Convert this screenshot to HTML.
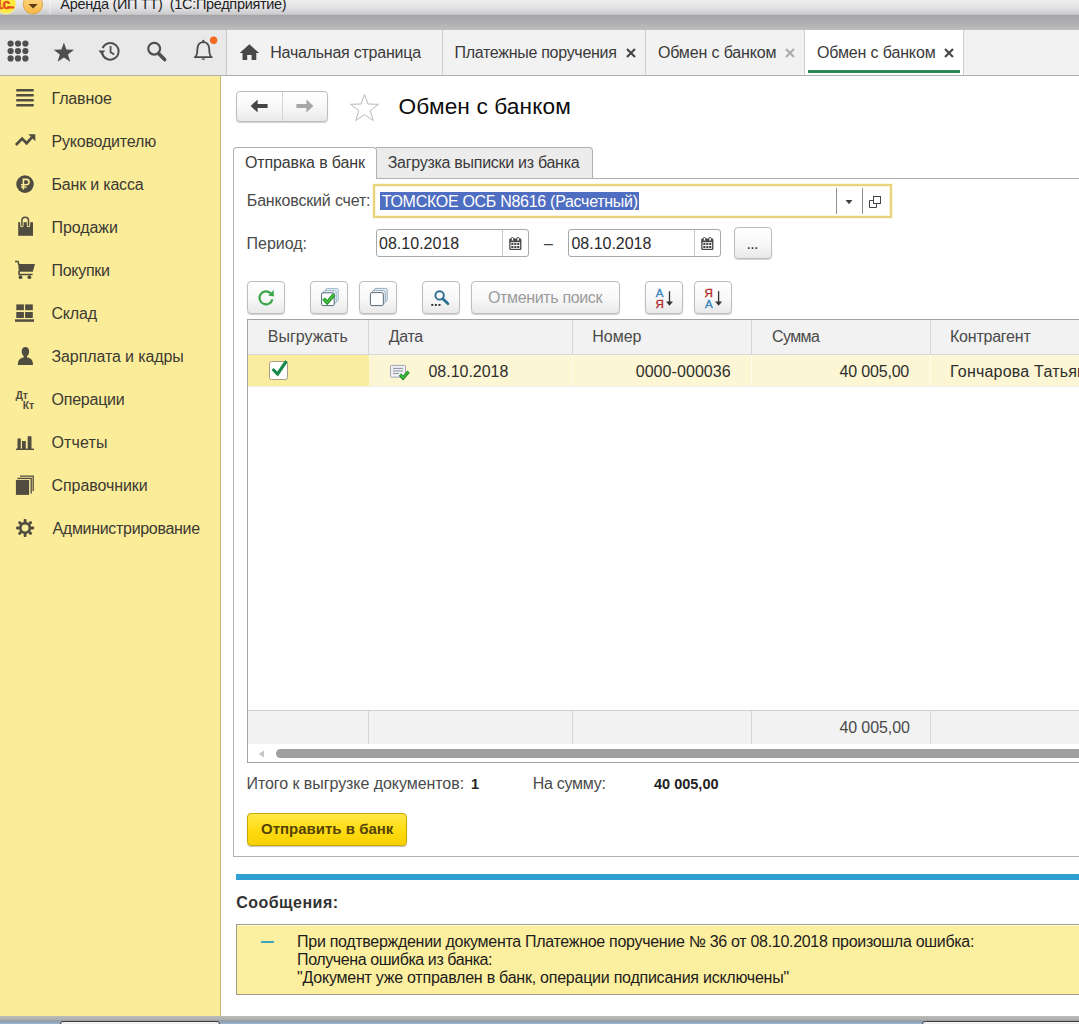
<!DOCTYPE html>
<html lang="ru">
<head>
<meta charset="utf-8">
<title>Обмен с банком</title>
<style>
*{box-sizing:border-box;margin:0;padding:0}
html,body{width:1079px;height:1024px;overflow:hidden;background:#fff}
body{font-family:"Liberation Sans",sans-serif;color:#333;position:relative;font-size:16px}
.abs{position:absolute}
.t{position:absolute;white-space:pre;line-height:20px}
#titlebar{left:0;top:0;width:1079px;height:15px;background:linear-gradient(#eeeeef,#e2e2e4 50%,#cdcdd0 90%,#bfbfc2)}
#titleband{left:0;top:15px;width:1079px;height:15px;background:linear-gradient(#a5a5a7,#adadaf 45%,#bebec0)}
#toolbar{left:0;top:30px;width:1079px;height:45px;background:#f2f2f2}
#tools{left:0;top:30px;width:227px;height:45px;background:#e9e9e9;border-right:1px solid #c6c6c6}
#tbline{left:0;top:75px;width:1079px;height:1px;background:#b0b0b0}
#sidebar{left:0;top:76px;width:221px;height:940px;background:#fbec9a;border-right:1px solid #c9bc70}
.tabsep{position:absolute;top:30px;height:45px;width:1px;background:#cdcdcd}
#taskbar{left:0;top:1016px;width:1079px;height:8px;background:linear-gradient(#d2d5d8,#aeb4ba 40%,#8d959d)}
.btn{border:1px solid #bdbdbd;border-radius:4px;background:linear-gradient(#ffffff,#f7f7f7 55%,#e9e9e9);box-shadow:0 1px 1px rgba(0,0,0,.18)}
.inp{border:1px solid #a8a8a8;border-radius:3px;background:#fff}
.vl{width:1px;background:#d6d6d6}
</style>
</head>
<body>
<!-- window title -->
<div id="titlebar" class="abs"></div>
<div id="titleband" class="abs"></div>
<div class="t" style="left:60.3px;top:-6px;font-size:14.5px;color:#1e1e1e;letter-spacing:-0.32px">Аренда (ИП ТТ)  (1С:Предприятие)</div>
<svg class="abs" style="left:0;top:0" width="56" height="16" viewBox="0 0 56 16">
 <defs>
  <radialGradient id="yg" cx="0.5" cy="0.45" r="0.55"><stop offset="0" stop-color="#fff04a"/><stop offset="0.75" stop-color="#ffe83c"/><stop offset="1" stop-color="#f7ec9a"/></radialGradient>
  <linearGradient id="og" x1="0" y1="0" x2="0" y2="1"><stop offset="0" stop-color="#ffd98a"/><stop offset="0.5" stop-color="#fdc968"/><stop offset="1" stop-color="#f7b548"/></linearGradient>
 </defs>
 <circle cx="6" cy="4.4" r="10" fill="url(#yg)"/>
 <text x="-4.6" y="8.5" font-family="Liberation Sans, sans-serif" font-size="14" font-weight="bold" fill="#e5521a" stroke="#e5521a" stroke-width="0.5" letter-spacing="-0.6">1с</text>
 <rect x="7" y="6.3" width="7.2" height="2.2" fill="#e5521a"/>
 <circle cx="32.9" cy="4.4" r="9.7" fill="url(#og)" stroke="#d6a248" stroke-width="0.9"/>
 <path d="M28.5 4 H37.7 L33.1 8.5 Z" fill="#5b3e12"/>
 <rect x="49.5" y="0" width="1" height="14" fill="#f6f6f6" opacity="0.7"/>
</svg>

<!-- toolbar -->
<div id="toolbar" class="abs"></div>
<div id="tools" class="abs"></div>

<svg class="abs" style="left:0;top:30px" width="230" height="45" viewBox="0 30 230 45">
 <g fill="#4f4f4f">
  <circle cx="10.6" cy="43.6" r="3.1"/><circle cx="18" cy="43.6" r="3.1"/><circle cx="25.4" cy="43.6" r="3.1"/>
  <circle cx="10.6" cy="51" r="3.1"/><circle cx="18" cy="51" r="3.1"/><circle cx="25.4" cy="51" r="3.1"/>
  <circle cx="10.6" cy="58.4" r="3.1"/><circle cx="18" cy="58.4" r="3.1"/><circle cx="25.4" cy="58.4" r="3.1"/>
  <path d="M63.9 42.4 L66.4 49.6 L74.1 49.8 L68 54.5 L70.2 61.8 L63.9 57.5 L57.6 61.8 L59.8 54.5 L53.7 49.8 L61.4 49.6 Z"/>
 </g>
 <!-- history -->
 <g fill="none" stroke="#4f4f4f" stroke-width="2">
  <path d="M102.2 53.2 A8.3 8.3 0 1 0 102.6 48.2" />
  <path d="M110.6 46 V52.2 L114.2 54.6" stroke-width="1.8"/>
 </g>
 <path d="M98.4 50.4 H105.2 L101.8 54.8 Z" fill="#4f4f4f"/>
 <!-- search -->
 <circle cx="154.2" cy="48.7" r="5.9" fill="none" stroke="#4f4f4f" stroke-width="2.2"/>
 <path d="M158.6 53.4 L164.6 59.6" stroke="#4f4f4f" stroke-width="3.6" stroke-linecap="round"/>
 <!-- bell -->
 <path d="M194.8 57.2 C197.9 55.4 197 51.5 197.5 48 C198 44.2 200.3 42.2 203.3 42.2 C206.3 42.2 208.6 44.2 209.1 48 C209.6 51.5 208.7 55.4 211.8 57.2 Z" fill="none" stroke="#4a4a4a" stroke-width="1.8" stroke-linejoin="round"/>
 <path d="M201.3 58.6 A2.1 2.1 0 0 0 205.3 58.6 Z" fill="#4a4a4a"/>
 <path d="M203.3 42.3 V40.8" stroke="#4a4a4a" stroke-width="2" stroke-linecap="round"/>
 <circle cx="213.6" cy="40.3" r="3.7" fill="#f26a1f"/>
</svg>


<!-- tabs -->
<div class="abs" style="left:805px;top:30px;width:159px;height:46px;background:#fff"></div>
<div class="tabsep" style="left:442px"></div>
<div class="tabsep" style="left:645px"></div>
<div class="tabsep" style="left:804px"></div>
<div class="tabsep" style="left:963px"></div>
<div id="tbline" class="abs"></div>
<div class="t" style="left:270.3px;top:43px;font-size:16px;color:#3a3a3a;letter-spacing:-0.24px">Начальная страница</div>
<div class="t" style="left:454.5px;top:43px;font-size:16px;color:#3a3a3a;letter-spacing:-0.29px">Платежные поручения</div>
<div class="t" style="left:657.9px;top:43px;font-size:16px;color:#3a3a3a;letter-spacing:-0.14px">Обмен с банком</div>
<div class="t" style="left:817.0px;top:43px;font-size:16px;color:#3a3a3a;letter-spacing:-0.14px">Обмен с банком</div>
<div class="abs" style="left:808px;top:70px;width:152px;height:3px;background:linear-gradient(#4a9c70,#218551 35%,#218551 80%,#5aa57c)"></div>

<svg class="abs" style="left:238px;top:42px" width="23" height="20" viewBox="238 42 23 20">
 <path d="M249.4 44.3 L259.2 53 H256.3 V60 H251.6 V55 H247.2 V60 H242.5 V53 H239.6 Z" fill="#484848"/>
</svg>
<svg class="abs" style="left:624px;top:46px" width="14" height="14" viewBox="0 0 14 14"><path d="M3 3 L11 11 M11 3 L3 11" stroke="#444" stroke-width="2.1"/></svg>
<svg class="abs" style="left:783px;top:46px" width="14" height="14" viewBox="0 0 14 14"><path d="M3 3 L11 11 M11 3 L3 11" stroke="#ababab" stroke-width="2.1"/></svg>
<svg class="abs" style="left:942px;top:46px" width="14" height="14" viewBox="0 0 14 14"><path d="M3 3 L11 11 M11 3 L3 11" stroke="#444" stroke-width="2.1"/></svg>


<!-- sidebar -->
<div id="sidebar" class="abs"></div>
<div class="t" style="left:51.5px;top:89px;font-size:16px;color:#3b3a33;letter-spacing:-0.13px">Главное</div>
<div class="t" style="left:51.5px;top:132px;font-size:16px;color:#3b3a33;letter-spacing:-0.19px">Руководителю</div>
<div class="t" style="left:51.5px;top:175px;font-size:16px;color:#3b3a33;letter-spacing:-0.19px">Банк и касса</div>
<div class="t" style="left:51.5px;top:218px;font-size:16px;color:#3b3a33;letter-spacing:-0.08px">Продажи</div>
<div class="t" style="left:51.5px;top:261px;font-size:16px;color:#3b3a33;letter-spacing:-0.3px">Покупки</div>
<div class="t" style="left:51.5px;top:304px;font-size:16px;color:#3b3a33;letter-spacing:-0.2px">Склад</div>
<div class="t" style="left:51.5px;top:347px;font-size:16px;color:#3b3a33;letter-spacing:-0.1px">Зарплата и кадры</div>
<div class="t" style="left:51.5px;top:390px;font-size:16px;color:#3b3a33;letter-spacing:-0.23px">Операции</div>
<div class="t" style="left:51.5px;top:433px;font-size:16px;color:#3b3a33;letter-spacing:0.14px">Отчеты</div>
<div class="t" style="left:51.5px;top:476px;font-size:16px;color:#3b3a33;letter-spacing:-0.08px">Справочники</div>
<div class="t" style="left:52.5px;top:519px;font-size:16px;color:#3b3a33;letter-spacing:-0.31px">Администрирование</div>

<svg class="abs" style="left:0;top:76px" width="50" height="480" viewBox="0 76 50 480">
 <g fill="#504c40">
  <!-- hamburger -->
  <rect x="16.2" y="89" width="17.5" height="2.6" rx="0.6"/><rect x="16.2" y="94" width="17.5" height="2.6" rx="0.6"/><rect x="16.2" y="99" width="17.5" height="2.6" rx="0.6"/><rect x="16.2" y="104" width="17.5" height="2.6" rx="0.6"/>
  <!-- trend -->
  <path d="M28.3 134.2 H35.3 V141.2 Z"/>
  <!-- ruble -->
  <circle cx="25" cy="184.1" r="8.8"/>
  <!-- bag -->
  <path d="M18.2 222.2 H33 V235.8 H18.2 Z"/>
  <!-- cart -->
  <path d="M18.2 264 H35 L32.8 271.8 H18.8 Z"/>
  <circle cx="20.5" cy="277.2" r="1.9"/><circle cx="29.4" cy="277.2" r="1.9"/>
  <!-- warehouse -->
  <rect x="16.3" y="304.4" width="7.6" height="5.8"/><rect x="25.1" y="304.4" width="7.7" height="5.8"/>
  <rect x="16.3" y="312" width="7.6" height="6"/><rect x="25.1" y="312" width="7.7" height="6"/>
  <rect x="15" y="319.3" width="19" height="2.5"/>
  <!-- person -->
  <ellipse cx="25.4" cy="351.6" rx="3.7" ry="4.5"/><rect x="23.6" y="354" width="3.6" height="5"/>
  <path d="M17.9 364.9 C17.9 360.5 19.5 358.6 23 357.6 L25.4 358.6 L27.8 357.6 C31.4 358.6 33 360.5 33 364.9 Z"/>
  <!-- bars -->
  <rect x="17.5" y="438.5" width="3.3" height="10.5"/><rect x="22" y="441" width="3.8" height="8"/><rect x="27.7" y="436.2" width="3.8" height="12.8"/>
  <rect x="16" y="448.6" width="18" height="1.4"/>
  <!-- books -->
  <rect x="15.9" y="479.9" width="13.2" height="15"/>
 </g>
 <path d="M15.9 145 L22.1 138.6 L26.6 143.2 L32.6 136.6" fill="none" stroke="#504c40" stroke-width="2.7" stroke-linecap="butt" stroke-linejoin="miter"/>
 <!-- ruble sign -->
 <path d="M23.4 189.6 V179.4 H26.4 A2.6 2.6 0 0 1 26.4 184.7 H21" fill="none" stroke="#fbec9a" stroke-width="1.6"/>
 <path d="M21 187.1 H26.6" fill="none" stroke="#fbec9a" stroke-width="1.3"/>
 <!-- bag handle -->
 <path d="M21.9 225.6 V220.6 A3.3 3.3 0 0 1 28.5 220.6 V225.6" fill="none" stroke="#fbec9a" stroke-width="3.4" stroke-linecap="round"/>
 <path d="M21.9 225.6 V220.6 A3.3 3.3 0 0 1 28.5 220.6 V225.6" fill="none" stroke="#504c40" stroke-width="1.5" stroke-linecap="round"/>
 <!-- cart handle / frame -->
 <path d="M15 261.6 H18 L18.9 264.5 M19 271 V274.4 H32.6" fill="none" stroke="#504c40" stroke-width="1.5"/>
 <!-- books back sheets -->
 <path d="M17.4 478.3 H31.2 V493.6 M20 476.2 H33.2 V491" fill="none" stroke="#504c40" stroke-width="1.3"/>
 <!-- gear -->
 <g transform="translate(25.1 528)" fill="#504c40"><rect x="-1.4" y="-9" width="2.8" height="4" rx="0.8" transform="rotate(0)"/><rect x="-1.4" y="-9" width="2.8" height="4" rx="0.8" transform="rotate(45)"/><rect x="-1.4" y="-9" width="2.8" height="4" rx="0.8" transform="rotate(90)"/><rect x="-1.4" y="-9" width="2.8" height="4" rx="0.8" transform="rotate(135)"/><rect x="-1.4" y="-9" width="2.8" height="4" rx="0.8" transform="rotate(180)"/><rect x="-1.4" y="-9" width="2.8" height="4" rx="0.8" transform="rotate(225)"/><rect x="-1.4" y="-9" width="2.8" height="4" rx="0.8" transform="rotate(270)"/><rect x="-1.4" y="-9" width="2.8" height="4" rx="0.8" transform="rotate(315)"/></g>
 <circle cx="25.1" cy="528" r="4.8" fill="none" stroke="#504c40" stroke-width="2.7"/>
</svg>
<div class="t" style="left:15.4px;top:385px;font-size:10.5px;font-weight:bold;color:#504c40;letter-spacing:-0.2px">Дт</div>
<div class="t" style="left:22.8px;top:395px;font-size:10.5px;font-weight:bold;color:#504c40;letter-spacing:-0.2px">Кт</div>



<!-- nav buttons -->
<div class="abs btn" style="left:236px;top:91px;width:92px;height:31px"></div>
<div class="abs" style="left:282px;top:92px;width:1px;height:29px;background:#d4d4d4"></div>
<svg class="abs" style="left:249px;top:99px" width="20" height="14" viewBox="0 0 20 14"><path d="M1.6 7 L8.6 0.6 V5 H18.6 V9 H8.6 V13.4 Z" fill="#454545"/></svg>
<svg class="abs" style="left:295px;top:99px" width="20" height="14" viewBox="0 0 20 14"><path d="M18.4 7 L11.4 0.6 V5 H1.4 V9 H11.4 V13.4 Z" fill="#a6a6a6"/></svg>
<svg class="abs" style="left:349px;top:93px" width="31" height="29" viewBox="0 0 31 29"><path d="M15.5 1.5 L19 11 L29.5 11.3 L21.2 17.6 L24.2 27.5 L15.5 21.6 L6.8 27.5 L9.8 17.6 L1.5 11.3 L12 11 Z" fill="#fff" stroke="#b9b9b9" stroke-width="1" stroke-linejoin="miter"/></svg>
<div class="t" style="left:398.6px;top:96px;font-size:22.67px;color:#0c0c0c;letter-spacing:0.12px">Обмен с банком</div>

<!-- panel -->
<div class="abs" style="left:233px;top:178px;width:861px;height:679px;border:1px solid #b0b0b0;background:#fff"></div>
<div class="abs" style="left:376px;top:147px;width:217px;height:32px;border:1px solid #b0b0b0;border-left:none;border-radius:0 4px 0 0;background:#ececec"></div>
<div class="abs" style="left:233px;top:147px;width:144px;height:32px;border:1px solid #b0b0b0;border-bottom:none;border-radius:4px 4px 0 0;background:#fff"></div>
<div class="t" style="left:245.0px;top:153px;font-size:16px;color:#3a3a3a;letter-spacing:-0.14px">Отправка в банк</div>
<div class="t" style="left:387.7px;top:153px;font-size:16px;color:#3a3a3a;letter-spacing:-0.28px">Загрузка выписки из банка</div>

<!-- bank account -->
<div class="t" style="left:246.8px;top:191px;font-size:16px;color:#4a4a4a;letter-spacing:-0.17px">Банковский счет:</div>
<div class="abs" style="left:373px;top:184px;width:519px;height:34px;border:2px solid #e8d47e;background:#fff;box-shadow:inset 0 0 0 1px #fbf6da,0 0 0 1px #fcf8e2"></div>
<div class="abs" style="left:380px;top:192px;width:259px;height:18px;background:#4f6dc1"></div>
<div class="t" style="left:381.7px;top:192px;font-size:16px;color:#ffffff;letter-spacing:-0.29px">ТОМСКОЕ ОСБ N8616 (Расчетный)</div>
<div class="abs" style="left:836px;top:188px;width:1px;height:26px;background:#909090"></div>
<div class="abs" style="left:862px;top:188px;width:1px;height:26px;background:#909090"></div>
<svg class="abs" style="left:840px;top:194px" width="48" height="18" viewBox="840 194 48 18"><path d="M845.6 200 H852.4 L849 204.2 Z" fill="#404040"/>
<path d="M873.5 200.5 H869.5 V207.5 H876.5 V203.5" fill="none" stroke="#444" stroke-width="1"/><rect x="873.5" y="196.5" width="7" height="7" fill="#fff" stroke="#444" stroke-width="1"/></svg>

<!-- period -->
<div class="t" style="left:246.5px;top:234px;font-size:16px;color:#4a4a4a">Период:</div>
<div class="abs inp" style="left:376px;top:229px;width:153px;height:28px"></div>
<div class="abs" style="left:502px;top:230px;width:1px;height:26px;background:#c8c8c8"></div>
<div class="t" style="left:379.0px;top:234px;font-size:16px;color:#2a2a2a;letter-spacing:0.02px">08.10.2018</div>
<div class="t" style="left:544.0px;top:234px;font-size:16px;color:#444">–</div>
<div class="abs inp" style="left:568px;top:229px;width:153px;height:28px"></div>
<div class="abs" style="left:694px;top:230px;width:1px;height:26px;background:#c8c8c8"></div>
<div class="t" style="left:571.5px;top:234px;font-size:16px;color:#2a2a2a;letter-spacing:-0.03px">08.10.2018</div>
<div class="abs btn" style="left:734px;top:227px;width:38px;height:32px"></div>
<div class="t" style="left:746.5px;top:234px;font-size:16px;color:#333;letter-spacing:-0.75px">...</div>
<svg class="abs" style="left:509px;top:237px" width="13" height="14" viewBox="0 0 13 14">
 <rect x="0.2" y="1.6" width="12.2" height="11.4" rx="1.3" fill="#444"/>
 <rect x="1.5" y="5.2" width="9.6" height="6.6" fill="#fff"/>
 <g fill="#444"><rect x="2.3" y="6" width="2.1" height="2"/><rect x="5.25" y="6" width="2.1" height="2"/><rect x="8.2" y="6" width="2.1" height="2"/>
 <rect x="2.3" y="9" width="2.1" height="2"/><rect x="5.25" y="9" width="2.1" height="2"/><rect x="8.2" y="9" width="2.1" height="2"/></g>
 <path d="M2.3 3.4 V1.6 A1.2 1.2 0 0 1 4.7 1.6 V3.4 M7.9 3.4 V1.6 A1.2 1.2 0 0 1 10.3 1.6 V3.4" fill="#fff" stroke="#444" stroke-width="0.9"/>
</svg><svg class="abs" style="left:701px;top:237px" width="13" height="14" viewBox="0 0 13 14">
 <rect x="0.2" y="1.6" width="12.2" height="11.4" rx="1.3" fill="#444"/>
 <rect x="1.5" y="5.2" width="9.6" height="6.6" fill="#fff"/>
 <g fill="#444"><rect x="2.3" y="6" width="2.1" height="2"/><rect x="5.25" y="6" width="2.1" height="2"/><rect x="8.2" y="6" width="2.1" height="2"/>
 <rect x="2.3" y="9" width="2.1" height="2"/><rect x="5.25" y="9" width="2.1" height="2"/><rect x="8.2" y="9" width="2.1" height="2"/></g>
 <path d="M2.3 3.4 V1.6 A1.2 1.2 0 0 1 4.7 1.6 V3.4 M7.9 3.4 V1.6 A1.2 1.2 0 0 1 10.3 1.6 V3.4" fill="#fff" stroke="#444" stroke-width="0.9"/>
</svg>

<!-- command bar -->
<div class="abs btn" style="left:247px;top:281px;width:38px;height:33px"></div>
<div class="abs btn" style="left:310px;top:281px;width:38px;height:33px"></div>
<div class="abs btn" style="left:359px;top:281px;width:38px;height:33px"></div>
<div class="abs btn" style="left:422px;top:281px;width:38px;height:33px"></div>
<div class="abs btn" style="left:471px;top:281px;width:149px;height:33px"></div>
<div class="t" style="left:488.0px;top:288px;font-size:16px;color:#9b9b9b;letter-spacing:-0.35px">Отменить поиск</div>
<div class="abs btn" style="left:645px;top:281px;width:38px;height:33px"></div>
<div class="abs btn" style="left:694px;top:281px;width:38px;height:33px"></div>

<svg class="abs" style="left:247px;top:281px" width="490" height="34" viewBox="247 281 490 34">
 <!-- refresh -->
 <path d="M270.6 293.2 A6.5 6.5 0 1 0 272.4 299.2" fill="none" stroke="#3aa648" stroke-width="2.2"/>
 <path d="M268.2 295.6 L273.6 290 L274 296.4 Z" fill="#3aa648"/>
 <!-- checked stack -->
 <g fill="#eaf2f7" stroke="#9db8c9" stroke-width="1">
  <rect x="325.6" y="288.6" width="12.6" height="12.6" rx="1.3"/>
  <rect x="323.6" y="290.6" width="12.6" height="12.6" rx="1.3"/>
 </g>
 <rect x="321.6" y="292.8" width="12.6" height="12.8" rx="1.3" fill="#fff" stroke="#4d6873" stroke-width="1"/>
 <path d="M323.6 298.6 L327.2 302.6 L334 294.6" fill="none" stroke="#1e7f22" stroke-width="3.6"/>
 <path d="M323.8 298.8 L327.2 302.4 L333.8 294.8" fill="none" stroke="#3ec53a" stroke-width="1.8"/>
 <!-- unchecked stack -->
 <g fill="#f3f7fa" stroke="#8ea6b8" stroke-width="1">
  <rect x="374.4" y="288.4" width="12.8" height="12.8" rx="1.5"/>
  <rect x="372.4" y="290.4" width="12.8" height="12.8" rx="1.5"/>
 </g>
 <rect x="370.4" y="292.6" width="12.9" height="13" rx="1.5" fill="#fff" stroke="#5a6873" stroke-width="1"/>
 <!-- find -->
 <circle cx="439.6" cy="295.4" r="4.2" fill="none" stroke="#2e6d92" stroke-width="1.9"/>
 <path d="M442.8 298.8 L448 303.8" stroke="#2e6d92" stroke-width="2.7" stroke-linecap="round"/>
 <g fill="#333"><rect x="431.3" y="304" width="2" height="1.9"/><rect x="434.9" y="304" width="2" height="1.9"/><rect x="438.5" y="304" width="2" height="1.9"/></g>
 <!-- sort asc -->
 <path d="M669.5 291.2 V303" stroke="#333" stroke-width="1.3"/>
 <path d="M666 301.4 H673 L669.5 305.8 Z" fill="#333"/>
 <text x="655.8" y="296.6" font-family="Liberation Sans, sans-serif" font-size="11.5" fill="#3b86bd" stroke="#3b86bd" stroke-width="0.35">А</text>
 <text x="655.4" y="307.6" font-family="Liberation Sans, sans-serif" font-size="11.5" fill="#b12b2b" stroke="#b12b2b" stroke-width="0.35">Я</text>
 <!-- sort desc -->
 <path d="M718.6 291.2 V303" stroke="#333" stroke-width="1.3"/>
 <path d="M715.1 301.4 H722.1 L718.6 305.8 Z" fill="#333"/>
 <text x="704.6" y="296.6" font-family="Liberation Sans, sans-serif" font-size="11.5" fill="#b12b2b" stroke="#b12b2b" stroke-width="0.35">Я</text>
 <text x="705" y="307.6" font-family="Liberation Sans, sans-serif" font-size="11.5" fill="#3b86bd" stroke="#3b86bd" stroke-width="0.35">А</text>
</svg>


<!-- table -->
<div class="abs" style="left:247px;top:319px;width:850px;height:444px;border:1px solid #a2a2a2;background:#fff"></div>
<div class="abs" style="left:248px;top:320px;width:848px;height:35px;background:#f2f2f2;border-bottom:1px solid #d9d9d9"></div>
<div class="abs" style="left:248px;top:355px;width:121px;height:31px;background:#fbed9f"></div>
<div class="abs" style="left:369px;top:355px;width:720px;height:31px;background:#fdf6d4"></div>
<div class="abs" style="left:248px;top:386px;width:848px;height:1px;background:#ededed"></div>
<div class="abs vl" style="left:368px;top:320px;height:35px"></div>
<div class="abs vl" style="left:572px;top:320px;height:35px"></div>
<div class="abs vl" style="left:751px;top:320px;height:35px"></div>
<div class="abs vl" style="left:930px;top:320px;height:35px"></div>
<div class="abs" style="left:572px;top:355px;width:1px;height:31px;background:#fefbea"></div>
<div class="abs" style="left:751px;top:355px;width:1px;height:31px;background:#fefbea"></div>
<div class="abs" style="left:930px;top:355px;width:1px;height:31px;background:#fefbea"></div>
<div class="t" style="left:267.7px;top:327px;font-size:16px;color:#4a4a4a;letter-spacing:0.04px">Выгружать</div>
<div class="t" style="left:388.7px;top:327px;font-size:16px;color:#4a4a4a;letter-spacing:-0.33px">Дата</div>
<div class="t" style="left:592.2px;top:327px;font-size:16px;color:#4a4a4a">Номер</div>
<div class="t" style="left:771.9px;top:327px;font-size:16px;color:#4a4a4a;letter-spacing:-0.55px">Сумма</div>
<div class="t" style="left:950.0px;top:327px;font-size:16px;color:#4a4a4a;letter-spacing:-0.22px">Контрагент</div>
<div class="t" style="left:428.5px;top:362px;font-size:16px;color:#2e2e2e;letter-spacing:-0.03px">08.10.2018</div>
<div class="t" style="left:635.7px;top:362px;font-size:16px;color:#2e2e2e;letter-spacing:0.07px">0000-000036</div>
<div class="t" style="left:839.6px;top:362px;font-size:16px;color:#2e2e2e;letter-spacing:-0.19px">40 005,00</div>
<div class="t" style="left:950.0px;top:362px;font-size:16px;color:#2e2e2e;letter-spacing:0.21px">Гончарова Татьяна</div>
<!-- checkbox -->
<div class="abs" style="left:269px;top:361px;width:19px;height:19px;border:1px solid #a59c84;border-radius:2.5px;background:#fff"></div>
<svg class="abs" style="left:268px;top:356px" width="24" height="24" viewBox="268 356 24 24"><path d="M272.6 369 L277.6 374 L286.4 361.2" fill="none" stroke="#14894a" stroke-width="3.1"/></svg>

<svg class="abs" style="left:388px;top:362px" width="24" height="20" viewBox="388 362 24 20">
 <rect x="390.5" y="365.4" width="15" height="11.8" rx="1" fill="#eef0f6" stroke="#a3a6b0" stroke-width="1"/>
 <path d="M393 368.4 H403 M393 370.9 H403 M393 373.4 H399" stroke="#8d919c" stroke-width="1"/>
 <path d="M400 374.6 L403 378 L408.6 371.6" fill="none" stroke="#1c7d22" stroke-width="3.2"/>
 <path d="M400.2 374.8 L403 377.8 L408.4 371.8" fill="none" stroke="#3cc43a" stroke-width="1.5"/>
</svg>

<!-- footer -->
<div class="abs" style="left:248px;top:710px;width:848px;height:1px;background:#cfcfcf"></div>
<div class="abs" style="left:248px;top:711px;width:848px;height:33px;background:#f2f2f2"></div>
<div class="abs vl" style="left:368px;top:711px;height:33px"></div>
<div class="abs vl" style="left:572px;top:711px;height:33px"></div>
<div class="abs vl" style="left:751px;top:711px;height:33px"></div>
<div class="abs vl" style="left:930px;top:711px;height:33px"></div>
<div class="t" style="left:839.4px;top:718px;font-size:16px;color:#4a4a4a;letter-spacing:-0.09px">40 005,00</div>
<!-- scrollbar -->
<div class="abs" style="left:276px;top:749px;width:830px;height:9px;border-radius:5px;background:#a0a0a0"></div>
<svg class="abs" style="left:258px;top:750px" width="7" height="8" viewBox="0 0 7 8"><path d="M6 0.5 V7.5 L0.5 4 Z" fill="#c6c6c6"/></svg>

<!-- totals -->
<div class="t" style="left:246.5px;top:774px;font-size:16px;color:#4a4a4a;letter-spacing:-0.06px">Итого к выгрузке документов:</div>
<div class="t" style="left:471.0px;top:774px;font-size:14.5px;color:#222;font-weight:bold">1</div>
<div class="t" style="left:532.7px;top:774px;font-size:16px;color:#4a4a4a;letter-spacing:-0.26px">На сумму:</div>
<div class="t" style="left:654.0px;top:774px;font-size:14.5px;color:#222;font-weight:bold">40 005,00</div>
<div class="abs" style="left:247px;top:813px;width:160px;height:33px;border:1px solid #c9a800;border-radius:4px;background:linear-gradient(#ffe84a,#ffdd14 50%,#f6cf00);box-shadow:0 1px 1px rgba(0,0,0,.25)"></div>
<div class="t" style="left:261.0px;top:819px;font-size:15px;color:#544400;font-weight:bold">Отправить в банк</div>

<!-- messages -->
<div class="abs" style="left:236px;top:874px;width:860px;height:6px;background:#2f9fd4"></div>
<div class="t" style="left:236.2px;top:893px;font-size:16px;color:#333;font-weight:bold;letter-spacing:0.48px">Сообщения:</div>
<div class="abs" style="left:236px;top:924px;width:860px;height:71px;border:1px solid #a39e8c;background:#fcef9f;box-shadow:inset 0 1px 0 #fffbe0"></div>
<div class="abs" style="left:260.5px;top:940.6px;width:13.5px;height:2.6px;background:#45a4bd"></div>
<div class="t" style="left:297.1px;top:932px;font-size:16px;color:#1c1c1c;letter-spacing:-0.3px">При подтверждении документа Платежное поручение № 36 от 08.10.2018 произошла ошибка:</div>
<div class="t" style="left:297.1px;top:950px;font-size:16px;color:#1c1c1c;letter-spacing:-0.41px">Получена ошибка из банка:</div>
<div class="t" style="left:297.1px;top:968px;font-size:16px;color:#1c1c1c;letter-spacing:-0.24px">&quot;Документ уже отправлен в банк, операции подписания исключены&quot;</div>


<div class="abs" style="left:0;top:1016px;width:1079px;height:8px;background:linear-gradient(#bcbcb8,#abadaf 45%,#97999c 62%,#8b9cb6 66%,#a3b4cc)"></div>
<div class="abs" style="left:60px;top:1021px;width:160px;height:6px;border:1px solid #3f3f3f;border-radius:3px 3px 0 0;background:#f1f1f1"></div>
<div class="abs" style="left:922px;top:1021px;width:170px;height:6px;border:1px solid #3f3f3f;border-radius:3px 3px 0 0;background:#f1f1f1"></div>
</body>
</html>
